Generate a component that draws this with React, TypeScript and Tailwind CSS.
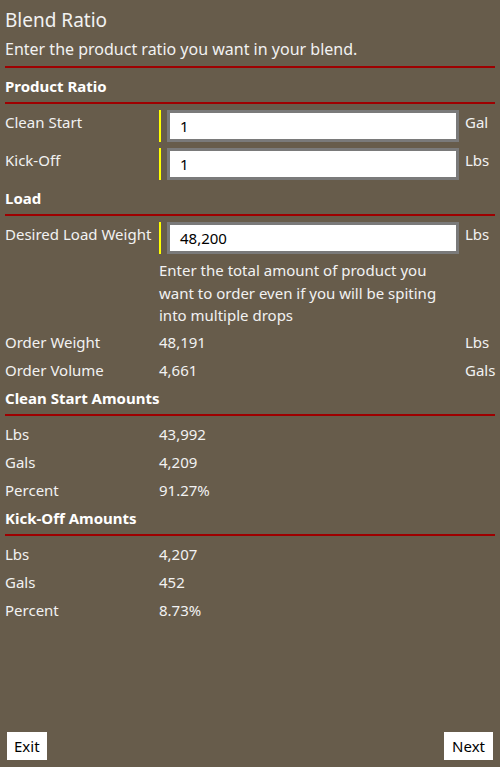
import React from "react";

const font = { fontFamily: '"Noto Sans", "Open Sans", sans-serif' };

function RedLine() {
  return <div className="mx-[5px] h-[2px] bg-[#9e0000]" />;
}

function Heading({ children }: { children: React.ReactNode }) {
  return (
    <div className="px-[5px] h-[28px] flex items-center text-[15px] font-bold text-white">
      {children}
    </div>
  );
}

function InputRow({ label, value, unit }: { label: string; value: string; unit: string }) {
  return (
    <div className="grid grid-cols-[154px_306px_30px] px-[5px] h-[32px] text-[15px] text-[#f2f2f2]">
      <div className="leading-[24px]">{label}</div>
      <div className="flex gap-[6px] pr-[6px]">
        <div className="w-[2px] bg-[#ffff00]" />
        <div className="flex-1 border-[3px] border-[#7a7a7a] bg-white flex items-center pl-[10px] text-black">
          {value}
        </div>
      </div>
      <div className="leading-[24px]">{unit}</div>
    </div>
  );
}

function ValueRow({ label, value, unit }: { label: string; value: string; unit?: string }) {
  return (
    <div className="grid grid-cols-[154px_306px_30px] px-[5px] h-[28px] items-center text-[15px] text-[#f2f2f2]">
      <div>{label}</div>
      <div>{value}</div>
      <div>{unit ?? ""}</div>
    </div>
  );
}

export default function App() {
  return (
    <div className="w-[500px] h-[767px] bg-[#675c4b] flex flex-col" style={font}>
      <div className="flex-1">
        <div className="px-[5px] pt-[6px] h-[36px] text-[19px] leading-[28px] text-[#f2f2f2]">Blend Ratio</div>
        <div className="px-[5px] h-[24px] text-[16px] leading-[26px] text-[#f2f2f2]">
          Enter the product ratio you want in your blend.
        </div>
        <div className="h-[6px]" />
        <RedLine />
        <div className="h-[4px]" />
        <Heading>Product Ratio</Heading>
        <div className="h-[2px]" />
        <RedLine />
        <div className="h-[6px]" />
        <InputRow label="Clean Start" value="1" unit="Gal" />
        <div className="h-[6px]" />
        <InputRow label="Kick-Off" value="1" unit="Lbs" />
        <div className="h-[4px]" />
        <Heading>Load</Heading>
        <div className="h-[2px]" />
        <RedLine />
        <div className="h-[6px]" />
        <InputRow label="Desired Load Weight" value="48,200" unit="Lbs" />
        <div className="pl-[159px] pr-[50px] pt-[5px] text-[15px] leading-[22.5px] text-[#f2f2f2] h-[74px]">
          Enter the total amount of product you want to order even if you will be spiting into multiple drops
        </div>
        <ValueRow label="Order Weight" value="48,191" unit="Lbs" />
        <ValueRow label="Order Volume" value="4,661" unit="Gals" />
        <Heading>Clean Start Amounts</Heading>
        <div className="h-[2px]" />
        <RedLine />
        <div className="h-[4px]" />
        <ValueRow label="Lbs" value="43,992" />
        <ValueRow label="Gals" value="4,209" />
        <ValueRow label="Percent" value="91.27%" />
        <Heading>Kick-Off Amounts</Heading>
        <div className="h-[2px]" />
        <RedLine />
        <div className="h-[4px]" />
        <ValueRow label="Lbs" value="4,207" />
        <ValueRow label="Gals" value="452" />
        <ValueRow label="Percent" value="8.73%" />
      </div>
      <div className="flex justify-between px-[7px] pb-[7px]">
        <button className="h-[28px] px-[7px] bg-white text-black text-[15px]">Exit</button>
        <button className="h-[28px] px-[8px] bg-white text-black text-[15px]">Next</button>
      </div>
    </div>
  );
}
